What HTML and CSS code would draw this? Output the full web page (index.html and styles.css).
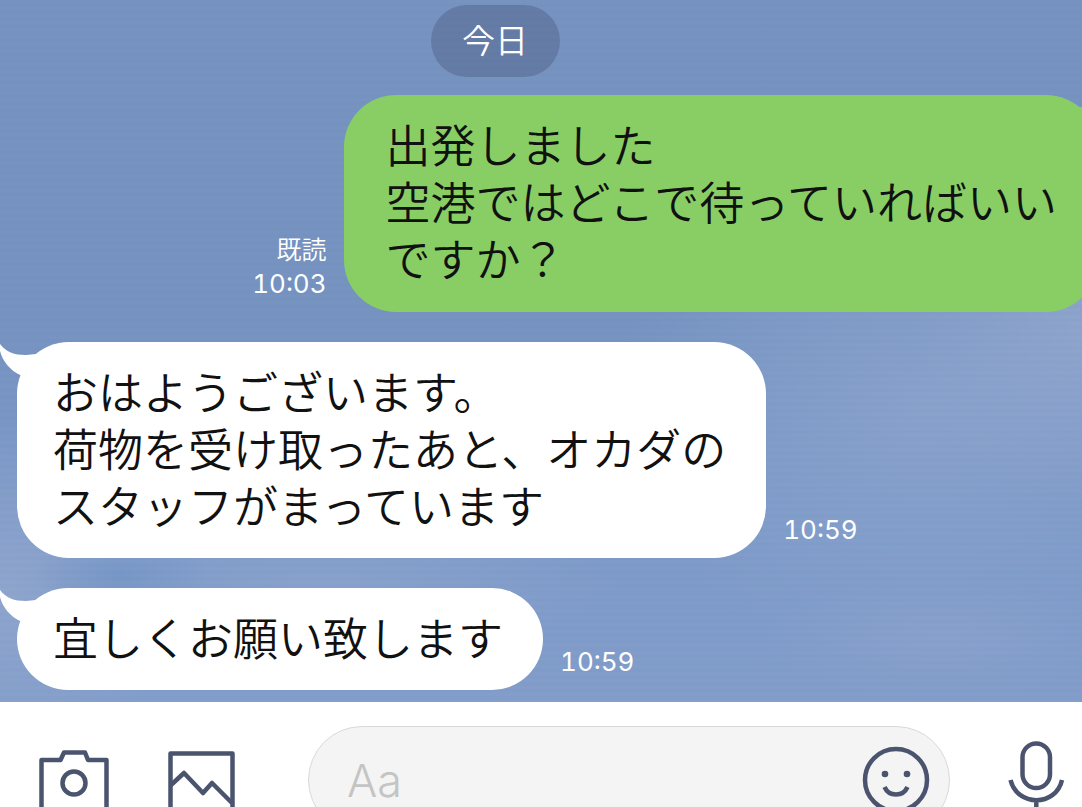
FILE: index.html
```
<!DOCTYPE html>
<html lang="ja">
<head>
    <meta charset="UTF-8">
    <meta name="viewport" content="width=device-width, initial-scale=1.0">
    <title>トーク</title>
    <link rel="stylesheet" href="styles.css">
</head>
<body>

    <main class="chat">
        <div class="date-row">
            <span class="date">今日</span>
        </div>

        <div class="message sent">
            <div class="meta">
                <span>既読</span>
                <time>10:03</time>
            </div>
            <div class="bubble">
                <svg class="tail" viewBox="0 0 60 40" aria-hidden="true"><path d="M0 2C6 10 14 13 26 13L36 12L34 40L20 33C10 28 3 20 0 9z"/></svg>
                <p>出発しました<br>空港ではどこで待っていればいい<br>ですか？</p>
            </div>
        </div>

        <div class="message received">
            <div class="bubble">
                <svg class="tail" viewBox="0 0 60 40" aria-hidden="true"><path d="M0 2C6 10 14 13 26 13L36 12L34 40L20 33C10 28 3 20 0 9z"/></svg>
                <p>おはようございます。<br>荷物を受け取ったあと、オカダの<br>スタッフがまっています</p>
            </div>
            <div class="meta">
                <time>10:59</time>
            </div>
        </div>

        <div class="message received">
            <div class="bubble">
                <svg class="tail" viewBox="0 0 60 40" aria-hidden="true"><path d="M0 2C6 10 14 13 26 13L36 12L34 40L20 33C10 28 3 20 0 9z"/></svg>
                <p>宜しくお願い致します</p>
            </div>
            <div class="meta">
                <time>10:59</time>
            </div>
        </div>
    </main>

    <form class="composer">
        <button type="button" class="icon-button" aria-label="カメラ">
            <svg width="72" height="72" viewBox="0 0 72 72">
                <path d="M3.5 16H22.5L26 8.5H47L50 16H68.5V68H3.5z"/>
                <circle cx="36" cy="39" r="11.5"/>
            </svg>
        </button>
        <button type="button" class="icon-button" aria-label="写真">
            <svg width="72" height="72" viewBox="0 0 72 72">
                <path d="M4.5 9.5H66.5V70H4.5z"/>
                <path d="M5 41L18 29L37 49L46 39L66 59"/>
            </svg>
        </button>
        <div class="field">
            <input type="text" placeholder="Aa" aria-label="メッセージ">
            <button type="button" class="icon-button" aria-label="スタンプ">
                <svg width="72" height="72" viewBox="0 0 72 72">
                    <circle cx="36" cy="36" r="31"/>
                    <circle class="dot" cx="25" cy="30" r="3.3"/>
                    <circle class="dot" cx="47" cy="30" r="3.3"/>
                    <path d="M24.5 43C29 53 43 53 47.5 43"/>
                </svg>
            </button>
        </div>
        <button type="button" class="icon-button" aria-label="音声">
            <svg width="72" height="82" viewBox="0 0 72 82">
                <rect x="22.5" y="4.5" width="27.5" height="44.5" rx="13.7"/>
                <path d="M10.5 41C17 68 56 68 62 41M36.3 61V78"/>
            </svg>
        </button>
    </form>

</body>
</html>
```
FILE: styles.css
```
* {
    box-sizing: border-box;
}
body {
    margin: 0;
    height: 100vh;
    overflow: hidden;
    display: flex;
    flex-direction: column;
    font-family: Inter, "Noto Sans CJK JP", sans-serif;
    background: #fff;
}
p {
    margin: 0;
}

/* sky wallpaper: fine horizontal grain over soft clouds */
.chat {
    flex: none;
    display: flex;
    flex-direction: column;
    gap: 30px;
    padding: 5px 0 12px;
    overflow: hidden;
    background:
        repeating-linear-gradient(rgba(255, 255, 255, 0.01) 0 3px, rgba(60, 90, 150, 0.01) 3px 7px),
        radial-gradient(90px 36px at 11% 82%, rgba(112, 146, 196, 0.7), transparent),
        radial-gradient(190px 170px at 0% 84%, rgba(146, 167, 206, 0.8), transparent),
        radial-gradient(300px 70px at 30% 83%, rgba(140, 164, 206, 0.7), transparent),
        radial-gradient(180px 60px at 87% 91%, rgba(138, 161, 205, 0.8), transparent),
        radial-gradient(170px 180px at 100% 47%, rgba(148, 168, 208, 0.7), transparent),
        radial-gradient(320px 260px at 86% 58%, rgba(138, 163, 205, 0.9), transparent),
        linear-gradient(#7592c0, #7592c0 45%, #7c99c8 75%, #829dca);
}
.date-row {
    display: flex;
    justify-content: center;
    padding-right: 91px;
    margin-bottom: -12px;
}
.date {
    padding: 0 32px 0 31px;
    border-radius: 36px;
    background: rgba(75, 90, 125, 0.4);
    color: #fff;
    font-size: 33px;
    font-weight: 350;
    line-height: 72px;
}
.message {
    display: flex;
    align-items: flex-end;
    gap: 17px;
}
.received {
    padding-left: 17px;
}
.sent {
    justify-content: flex-end;
    margin-right: -16px;
}
.bubble {
    position: relative;
    padding: 20px 40px 25px 36px;
    border-radius: 52px;
    background: #fff;
    color: #111;
    font-family: "Noto Sans CJK JP", sans-serif;
    font-size: 45px;
    font-weight: 350;
    line-height: 57px;
    white-space: nowrap;
}
.sent .bubble {
    padding: 20px 41px 26px 42px;
    background: #88ce65;
}
.tail {
    position: absolute;
    top: 0;
    left: -17px;
    width: 60px;
    height: 40px;
    fill: #fff;
}
.sent .tail {
    left: auto;
    right: -17px;
    fill: #88ce65;
    transform: scaleX(-1);
}
.meta {
    display: flex;
    flex-direction: column;
    align-items: flex-end;
    padding-bottom: 12px;
    color: #fff;
    font-size: 26px;
    font-variant-numeric: tabular-nums;
    line-height: 33px;
}
.meta span {
    font-size: 25px;
    font-weight: 350;
}

.composer {
    flex: none;
    display: flex;
    align-items: center;
    padding: 24px 10px 24px 38px;
    background: #fff;
}
.icon-button {
    flex: none;
    display: block;
    padding: 0;
    border: 0;
    background: none;
    cursor: pointer;
}
.icon-button + .icon-button {
    margin-left: 56px;
}
.icon-button svg {
    display: block;
    fill: none;
    stroke: #4b546e;
    stroke-width: 4.5;
    stroke-linejoin: round;
}
.icon-button .dot {
    fill: #4b546e;
    stroke: none;
}
.field {
    flex: 1;
    display: flex;
    align-items: center;
    min-width: 0;
    height: 108px;
    margin: 0 50px 0 70px;
    padding: 0 17px 0 38px;
    border: 1px solid #d9d9d9;
    border-radius: 54px;
    background: #f4f4f4;
}
.field input {
    flex: 1;
    min-width: 0;
    padding: 0;
    border: 0;
    outline: 0;
    background: none;
    color: #111;
    font-family: Inter, "Noto Sans CJK JP", sans-serif;
    font-size: 45px;
    font-weight: 350;
}
.field input::placeholder {
    color: #c4c4c4;
}
```
